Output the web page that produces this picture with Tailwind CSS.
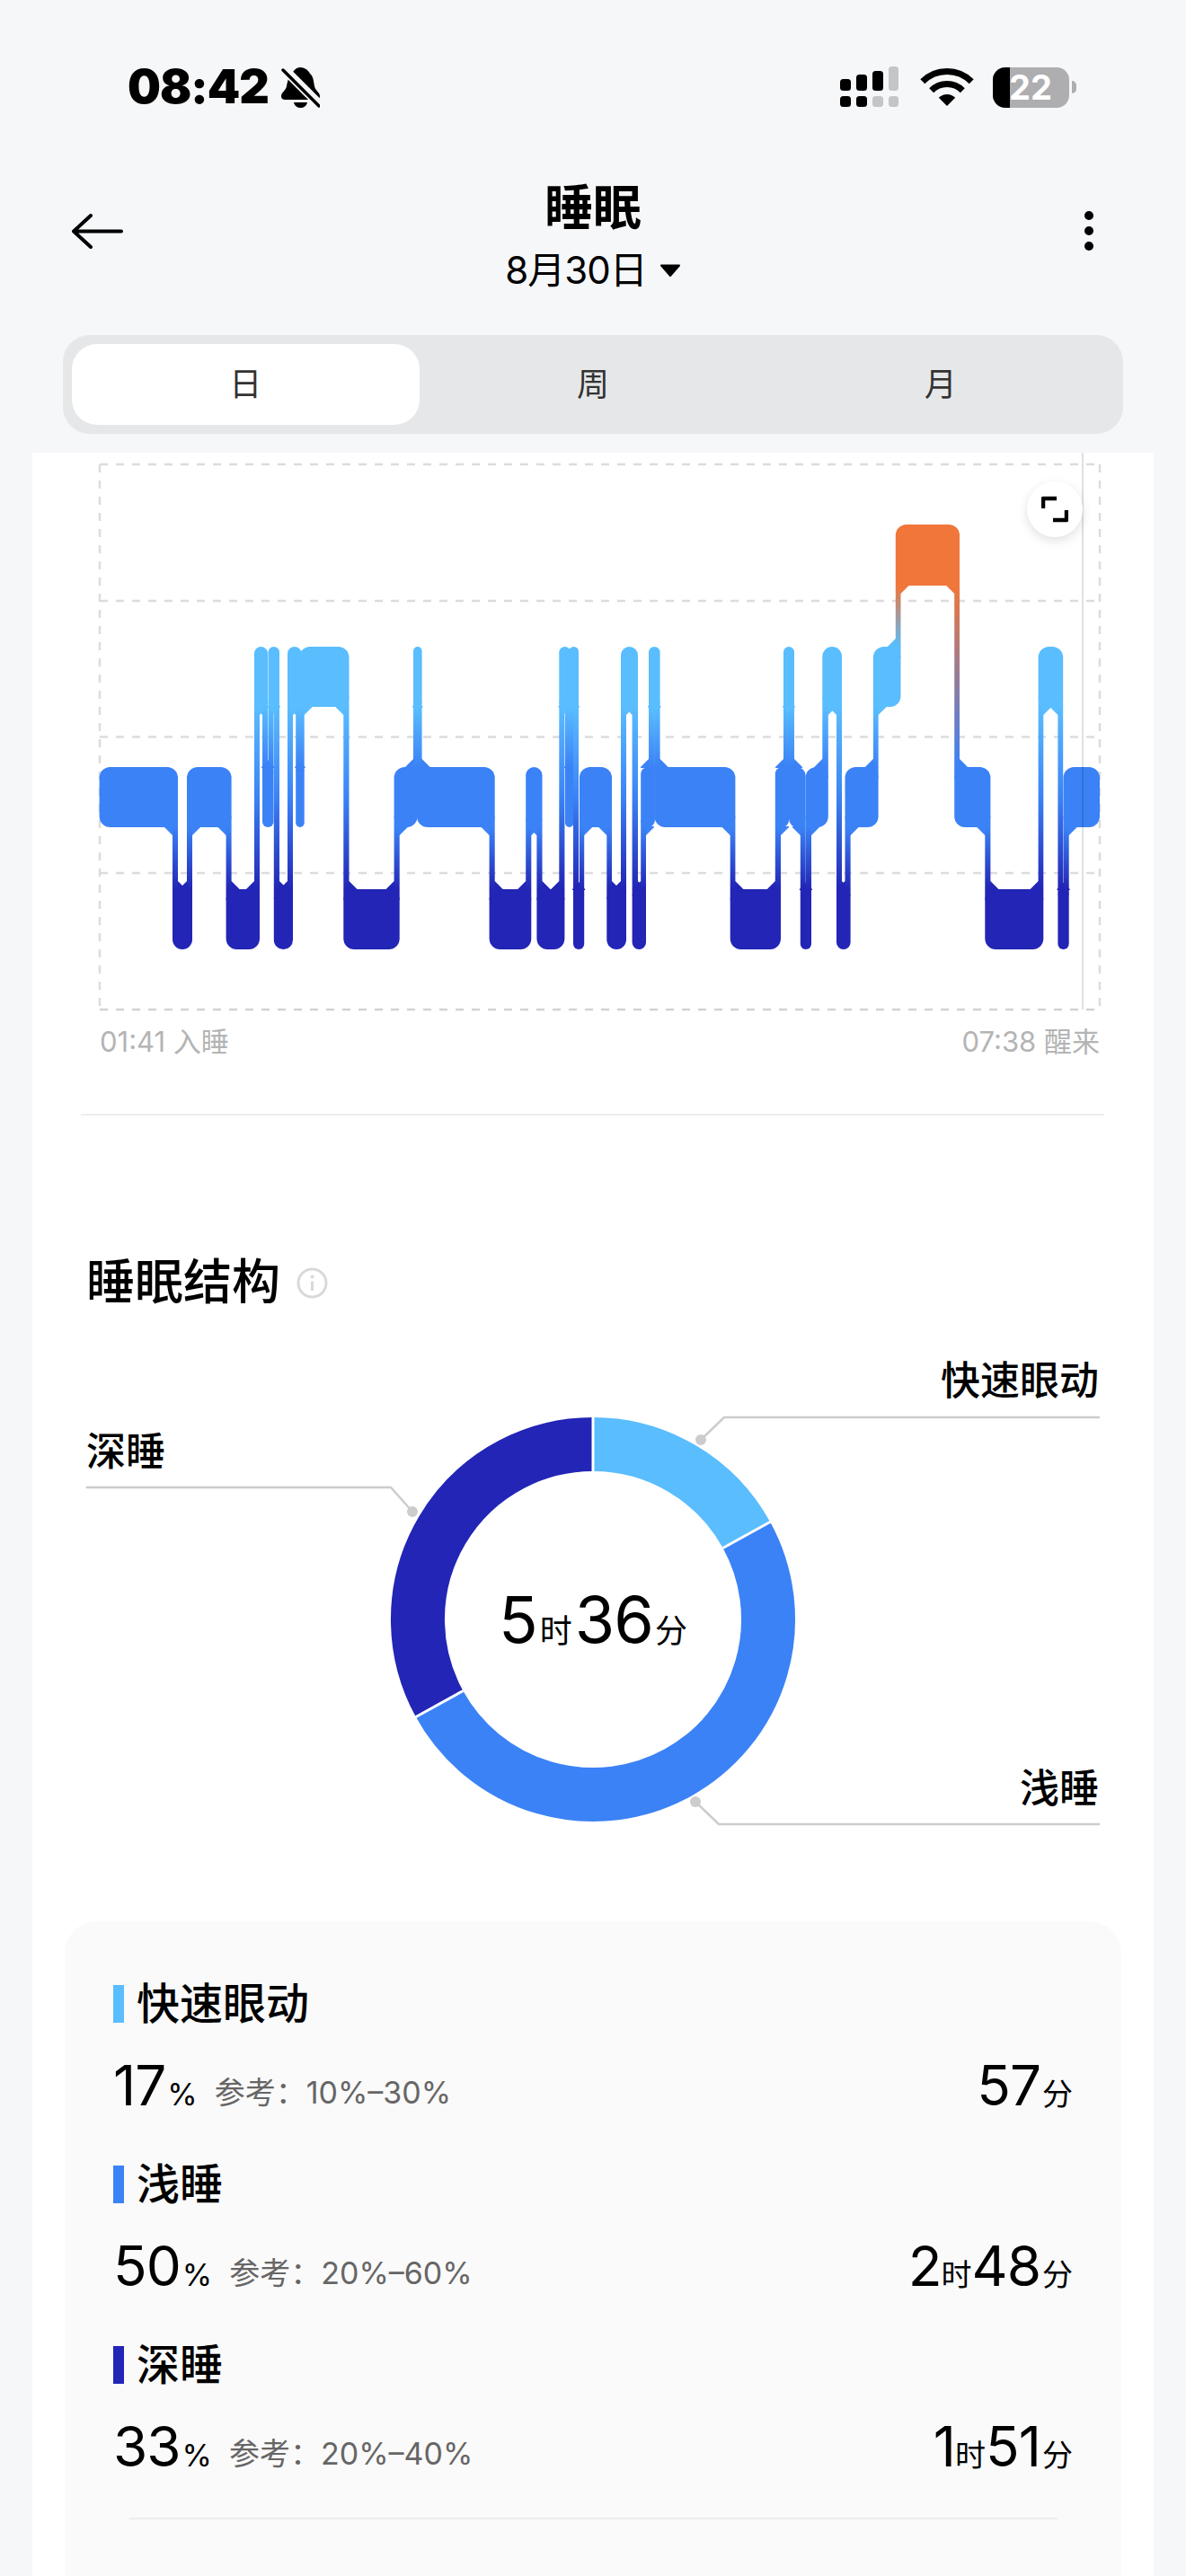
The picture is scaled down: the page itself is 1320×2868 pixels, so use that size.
<!DOCTYPE html>
<html lang="zh-CN">
<head>
<meta charset="UTF-8">
<title>睡眠</title>
<script src="https://cdn.jsdelivr.net/npm/@tailwindcss/browser@4"></script>
</head>
<body class="m-0">
<div class="w-[1320px] h-[2868px] overflow-hidden bg-[#f6f7f9] text-black font-['Inter','Noto_Sans_CJK_SC',sans-serif]">

  <!-- status bar -->
  <div class="h-[122px] pt-[74px] pl-[142px] pr-[122px] flex items-start justify-between">
    <div class="flex items-center h-[46px] gap-[14px]">
      <span class="text-[52px] leading-[46px] font-black tracking-[-1px]">08:42</span>
      <svg width="43" height="45" viewBox="0 0 43 45">
        <path d="M21 0C26 0 30 3 32 7C36 10 36 16 37 21C38 26 43 28 43 32C43 35 41 36 38 36H5C2 36 0 35 0 32C0 28 5 26 6 21C7 16 8 10 12 7C14 3 17 0 21 0Z" fill="#000"/>
        <path d="M14 39H29C28 43 25 45 21.5 45C18 45 15 43 14 39Z" fill="#000"/>
        <path d="M4 -1L46 41" stroke="#f6f7f9" stroke-width="5"/>
        <path d="M2 3L42 43" stroke="#f6f7f9" stroke-width="7"/>
        <path d="M2 3L42 43" stroke="#000" stroke-width="3.5" stroke-linecap="round"/>
      </svg>
    </div>
    <div class="flex items-center h-[46px]">
      <svg width="66" height="46" viewBox="0 0 66 46">
        <rect x="0" y="14" width="12" height="13" rx="3.5" fill="#000"/>
        <rect x="18" y="9" width="12" height="18" rx="3.5" fill="#000"/>
        <rect x="36" y="5" width="12" height="22" rx="3.5" fill="#000"/>
        <rect x="54" y="0" width="11" height="27" rx="3.5" fill="#c4c5c7"/>
        <rect x="0" y="33" width="12" height="12" rx="3.5" fill="#000"/>
        <rect x="18" y="33" width="12" height="12" rx="3.5" fill="#000"/>
        <rect x="36" y="33" width="12" height="12" rx="3.5" fill="#c4c5c7"/>
        <rect x="54" y="33" width="11" height="12" rx="3.5" fill="#c4c5c7"/>
      </svg>
      <svg class="ml-[23px]" width="60" height="44" viewBox="0 0 60 44">
        <path d="M2.8 15.8A38.5 38.5 0 0 1 57.2 15.8" fill="none" stroke="#000" stroke-width="7"/>
        <path d="M12.7 25.7A24.5 24.5 0 0 1 47.3 25.7" fill="none" stroke="#000" stroke-width="7"/>
        <path d="M30 43L20.8 33.8A13 13 0 0 1 39.2 33.8Z" fill="#000"/>
      </svg>
      <div class="relative ml-[21px] w-[85px] h-[45px] rounded-[14px] overflow-hidden bg-[#aeaeb0]">
        <div class="w-[19px] h-full bg-black"></div>
        <span class="absolute left-[18px] top-0 h-[45px] leading-[45px] text-[38px] font-bold text-white">22</span>
      </div>
      <div class="ml-[3px] w-[5px] h-[14px] rounded-r-[5px] bg-[#aeaeb0]"></div>
    </div>
  </div>

  <!-- nav -->
  <div class="grid grid-cols-[1fr_auto_1fr] h-[251px] pt-[80px] px-[80px]">
    <svg class="mt-[36px]" width="57" height="39" viewBox="0 0 57 39">
      <path d="M21 2L2 19.5L21 37M2 19.5H55" fill="none" stroke="#000" stroke-width="4" stroke-linecap="round" stroke-linejoin="round"/>
    </svg>
    <div class="flex flex-col items-center">
      <div class="h-[60px] leading-[60px] text-[54px] font-semibold">睡眠</div>
      <div class="h-[50px] mt-[14px] flex items-center gap-[14px]">
        <span class="text-[42px] leading-[50px] tracking-[-1px]">8月30日</span>
        <svg width="24" height="14" viewBox="0 0 24 14"><path d="M2 1.5H22L12 13Z" fill="#000" stroke="#000" stroke-width="2" stroke-linejoin="round"/></svg>
      </div>
    </div>
    <svg class="mt-[33px] mr-[21px] justify-self-end" width="14" height="44" viewBox="0 0 14 44">
      <circle cx="7" cy="5" r="5" fill="#000"/><circle cx="7" cy="22" r="5" fill="#000"/><circle cx="7" cy="39" r="5" fill="#000"/>
    </svg>
  </div>

  <!-- tabs -->
  <div class="ml-[70px] w-[1180px] h-[110px] p-[10px] rounded-[30px] bg-[#e6e7e9] grid grid-cols-3 text-[36px] text-[#333]">
    <div class="rounded-[28px] bg-white flex items-center justify-center">日</div>
    <div class="flex items-center justify-center">周</div>
    <div class="flex items-center justify-center">月</div>
  </div>

  <!-- card -->
  <div class="mt-[21px] ml-[36px] w-[1248px] bg-white">
    <div class="relative h-[636px]">
      <svg id="chart" class="block" width="1248" height="636" viewBox="36 504 1248 636" xmlns="http://www.w3.org/2000/svg">
        <defs>
          <linearGradient id="g-A-R" gradientUnits="userSpaceOnUse" x1="0" x2="0" y1="652" y2="720"><stop offset="0" stop-color="#f0763a"/><stop offset="1" stop-color="#5abdfe"/></linearGradient>
          <linearGradient id="g-A-L" gradientUnits="userSpaceOnUse" x1="0" x2="0" y1="652" y2="854"><stop offset="0" stop-color="#f0763a"/><stop offset="1" stop-color="#3b82f6"/></linearGradient>
          <linearGradient id="g-R-L" gradientUnits="userSpaceOnUse" x1="0" x2="0" y1="787" y2="854"><stop offset="0" stop-color="#5abdfe"/><stop offset="1" stop-color="#3b82f6"/></linearGradient>
          <linearGradient id="g-R-D" gradientUnits="userSpaceOnUse" x1="0" x2="0" y1="787" y2="990"><stop offset="0" stop-color="#5abdfe"/><stop offset="0.5" stop-color="#3b82f6"/><stop offset="1" stop-color="#2225b5"/></linearGradient>
          <linearGradient id="g-L-D" gradientUnits="userSpaceOnUse" x1="0" x2="0" y1="921" y2="990"><stop offset="0" stop-color="#3b82f6"/><stop offset="1" stop-color="#2225b5"/></linearGradient>
        </defs>
        <g fill="none" stroke="#dcdcdc" stroke-width="2.5" stroke-dasharray="9 9">
          <path d="M111 517H1224"/>
          <path d="M111 669H1224"/>
          <path d="M111 820.5H1224"/>
          <path d="M111 972H1224"/>
          <path d="M111 1124H1224" stroke="#d2d2d2"/>
          <path d="M111 517V1124"/>
          <path d="M1224 517V1124"/>
        </g>
        <g id="bars"></g>
        <path d="M1205 504V1124" stroke="#000" stroke-opacity="0.12" stroke-width="2"/>
      </svg>
      <div class="absolute left-[1107px] top-[32px] w-[62px] h-[62px] rounded-full bg-white shadow-[0_4px_12px_rgba(0,0,0,0.12)] flex items-center justify-center">
        <svg width="30" height="30" viewBox="0 0 30 30">
          <path d="M2 14V3H17M28 16V27H13" fill="none" stroke="#000" stroke-width="4.5" stroke-linejoin="round"/>
        </svg>
      </div>
    </div>

    <div class="h-[40px] pl-[75px] pr-[60px] flex justify-between items-center text-[31px] leading-[40px] text-[#b4b4b4]">
      <span>01:41 入睡</span>
      <span>07:38 醒来</span>
    </div>

    <div class="mt-[60px] ml-[54px] w-[1139px] h-[2px] bg-[#eeeeee]"></div>

    <div class="mt-[156px] ml-[60px] h-[60px] flex items-center gap-[18px]">
      <span class="text-[54px] leading-[60px] font-medium">睡眠结构</span>
      <svg width="35" height="35" viewBox="0 0 35 35">
        <circle cx="17.5" cy="17.5" r="15.5" fill="none" stroke="#d9d9d9" stroke-width="3"/>
        <circle cx="17.5" cy="10.5" r="2" fill="#d9d9d9"/>
        <path d="M17.5 15.5V26" stroke="#d9d9d9" stroke-width="3"/>
      </svg>
    </div>

    <div class="relative h-[681px]">
      <svg class="block" width="1248" height="681" viewBox="36 1458 1248 681">
        <g fill="none" stroke-width="60">
          <path d="M660 1608A195 195 0 0 1 830.9 1709" stroke="#5abdfe"/>
          <path d="M830.9 1709A195 195 0 0 1 489.1 1897" stroke="#3b82f6"/>
          <path d="M489.1 1897A195 195 0 0 1 660 1608" stroke="#2225b5"/>
        </g>
        <g stroke="#fff" stroke-width="3">
          <path d="M660 1577V1639"/>
          <path d="M804.6 1723.5L858 1694"/>
          <path d="M515.4 1882.5L462 1912"/>
        </g>
        <g fill="none" stroke="#cccccc" stroke-width="2.5">
          <path d="M780 1603L806 1578H1224"/>
          <path d="M459 1683L435 1656H96"/>
          <path d="M774 2006L800 2031H1224"/>
        </g>
        <g fill="#cccccc">
          <circle cx="780" cy="1603" r="6"/>
          <circle cx="459" cy="1683" r="6"/>
          <circle cx="774" cy="2006" r="6"/>
        </g>
      </svg>
      <span class="absolute right-[61px] top-[49px] text-[44px] leading-[60px] font-medium">快速眼动</span>
      <span class="absolute left-[60px] top-[128px] text-[44px] leading-[60px] font-medium">深睡</span>
      <span class="absolute right-[61px] top-[503px] text-[44px] leading-[60px] font-medium">浅睡</span>
      <div class="absolute left-0 top-[305px] w-full h-[80px] flex items-baseline justify-center">
        <span class="text-[72px] leading-[80px] tracking-[-1px]">5</span><span class="text-[36px] mx-[3px]">时</span><span class="text-[72px] leading-[80px] tracking-[-1px]">36</span><span class="text-[36px] ml-[2px]">分</span>
      </div>
    </div>

    <!-- stage table -->
    <div class="ml-[36px] w-[1176px] h-[760px] pt-[61px] pl-[54px] pr-[54px] rounded-t-[36px] bg-[#fafafa]">

      <div class="h-[62px] flex items-center">
        <div class="w-[12px] h-[42px] bg-[#5abdfe]"></div>
        <span class="ml-[14px] text-[48px] leading-[62px] font-medium">快速眼动</span>
      </div>
      <div class="mt-[20px] h-[80px] flex items-baseline justify-between">
        <div class="flex items-baseline">
          <span class="text-[62px] leading-[80px] tracking-[-1px]">17</span><span class="ml-[2px] text-[34px]">%</span>
          <span class="ml-[19px] text-[34px] text-[#666] -translate-y-[2px]">参考：10%–30%</span>
        </div>
        <div class="flex items-baseline">
          <span class="text-[62px] leading-[80px] tracking-[-1px]">57</span><span class="ml-[2px] text-[34px]">分</span>
        </div>
      </div>

      <div class="mt-[39px] h-[62px] flex items-center">
        <div class="w-[12px] h-[42px] bg-[#3b82f6]"></div>
        <span class="ml-[14px] text-[48px] leading-[62px] font-medium">浅睡</span>
      </div>
      <div class="mt-[20px] h-[80px] flex items-baseline justify-between">
        <div class="flex items-baseline">
          <span class="text-[62px] leading-[80px] tracking-[-1px]">50</span><span class="ml-[2px] text-[34px]">%</span>
          <span class="ml-[19px] text-[34px] text-[#666] -translate-y-[2px]">参考：20%–60%</span>
        </div>
        <div class="flex items-baseline">
          <span class="text-[62px] leading-[80px] tracking-[-1px]">2</span><span class="text-[34px]">时</span><span class="text-[62px] leading-[80px] tracking-[-1px]">48</span><span class="ml-[2px] text-[34px]">分</span>
        </div>
      </div>

      <div class="mt-[39px] h-[62px] flex items-center">
        <div class="w-[12px] h-[42px] bg-[#2225b5]"></div>
        <span class="ml-[14px] text-[48px] leading-[62px] font-medium">深睡</span>
      </div>
      <div class="mt-[20px] h-[80px] flex items-baseline justify-between">
        <div class="flex items-baseline">
          <span class="text-[62px] leading-[80px] tracking-[-1px]">33</span><span class="ml-[2px] text-[34px]">%</span>
          <span class="ml-[19px] text-[34px] text-[#666] -translate-y-[2px]">参考：20%–40%</span>
        </div>
        <div class="flex items-baseline">
          <span class="text-[62px] leading-[80px] tracking-[-1px]">1</span><span class="text-[34px]">时</span><span class="text-[62px] leading-[80px] tracking-[-1px]">51</span><span class="ml-[2px] text-[34px]">分</span>
        </div>
      </div>

      <div class="mt-[39px] ml-[18px] w-[1033px] h-[2px] bg-[#ececec]"></div>
    </div>
  </div>
</div>

<script>
  // band tops / bottoms for each sleep stage, page px
  const bands = {
    A: { top: 584, bot: 652, color: '#f0763a', rank: 0 },
    R: { top: 720, bot: 787, color: '#5abdfe', rank: 1 },
    L: { top: 854, bot: 921, color: '#3b82f6', rank: 2 },
    D: { top: 990, bot: 1057, color: '#2225b5', rank: 3 }
  };

  const segments = [
    ['L',110.6,198],['D',192,214],['L',208,257.6],['D',251.6,289],['R',283,298],['L',292,304.5],
    ['R',298.5,311],['D',304.8,326],['R',320,335.5],['L',329.2,338.7],['R',333,388.5],['D',382.3,444.7],
    ['L',438.6,464.6],['R',460,469.6],['L',464,550.7],['D',544.6,591.3],['L',585.2,603.5],['D',597.4,628.4],
    ['R',622.3,635],['L',629,638.5],['R',633,644],['D',638,650.2],['L',644.9,681],['D',675.3,697],
    ['R',691,710],['D',703.6,719],['L',713.2,728.9],['R',722,734.6],['L',728.5,818.4],['D',812.7,869],
    ['L',862.8,878],['R',872,884],['L',878,896.5],['D',890.8,903],['L',896.5,921.8],['R',915.3,937],
    ['D',931,946.6],['L',940.5,977.6],['R',971.9,1002.5],['A',996.8,1068],['L',1062.2,1102.4],['D',1096.3,1161.3],
    ['R',1155.6,1183.2],['D',1177.4,1189.7],['L',1183.5,1224]
  ];

  const bars = document.getElementById('bars');
  const NS = 'http://www.w3.org/2000/svg';
  const CHAMFER = 9;

  function add(tag, attrs) {
    const el = document.createElementNS(NS, tag);
    for (const k in attrs) el.setAttribute(k, attrs[k]);
    bars.appendChild(el);
  }

  const radius = (x0, x1) => Math.min(12, (x1 - x0) / 2);

  segments.forEach(([lvl, x0, x1]) => {
    const b = bands[lvl];
    add('rect', { x: x0, y: b.top, width: x1 - x0, height: b.bot - b.top, rx: radius(x0, x1), fill: b.color });
  });

  for (let i = 0; i < segments.length - 1; i++) {
    const [la, a0, a1] = segments[i];
    const [lb, b0, b1] = segments[i + 1];
    const A = bands[la], B = bands[lb];
    const aUpper = A.rank < B.rank;
    const up = aUpper ? la : lb, low = aUpper ? lb : la;
    const y0 = bands[up].bot, y1 = bands[low].top;

    // square off the band corners the connector runs into
    const ra = radius(a0, a1), rb = radius(b0, b1);
    add('rect', { x: a1 - ra, y: aUpper ? A.bot - ra : A.top, width: ra, height: ra, fill: A.color });
    add('rect', { x: b0, y: aUpper ? B.top : B.bot - rb, width: rb, height: rb, fill: B.color });

    // little corner fillets where the connector meets each band
    const ca = Math.min(CHAMFER, b0 - a0 + 1);
    const cb = Math.min(CHAMFER, b1 - a1 + 1);
    const ya = aUpper ? A.bot : A.top, sa = aUpper ? 1 : -1;
    const yb = aUpper ? B.top : B.bot, sb = aUpper ? -1 : 1;
    add('path', { d: `M${b0 - ca} ${ya - sa}L${b0 + 1} ${ya - sa}L${b0 + 1} ${ya + sa * ca}L${b0} ${ya + sa * ca}L${b0 - ca} ${ya}Z`, fill: A.color });
    add('path', { d: `M${a1 + cb} ${yb - sb}L${a1 - 1} ${yb - sb}L${a1 - 1} ${yb + sb * cb}L${a1} ${yb + sb * cb}L${a1 + cb} ${yb}Z`, fill: B.color });

    add('rect', { x: b0, y: y0 - 0.5, width: a1 - b0, height: y1 - y0 + 1, fill: `url(#g-${up}-${low})` });
  }
</script>
</body>
</html>
